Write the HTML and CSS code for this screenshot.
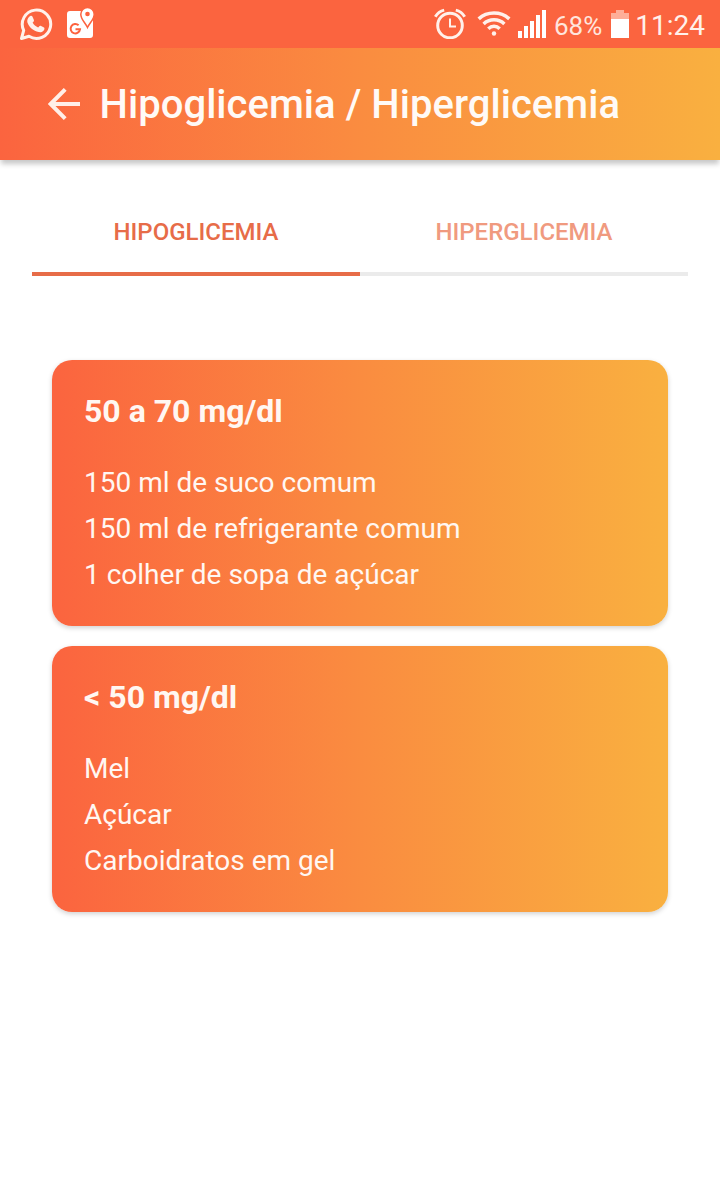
FILE: index.html
```
<!DOCTYPE html>
<html lang="pt-BR">
<head>
<meta charset="utf-8">
<title>Hipoglicemia / Hiperglicemia</title>
<link rel="stylesheet" href="styles.css">
</head>
<body>
<div class="status">
  <svg class="whatsapp" width="34" height="34" viewBox="0 0 34 34">
    <path d="M2.500 31.500 4.700 23.400A14.200 14.200 0 1 1 10 29.300Z" fill="none" stroke="#fff1eb" stroke-width="3" stroke-linejoin="round"/>
    <path d="M11.300 9c.7-.4 1.700-.3 2.100.5l1.500 3.400c.3.800-.2 1.500-1.300 2.700 1.300 2.400 3.100 3.900 5.500 5 1.100-1.500 1.700-2.200 2.500-1.900l3.400 1.700c.7.400.5 1.700-.1 2.800-.9 1.500-3.200 2.400-5.200 1.900-5.400-1.400-9.500-5-11.100-9.200-.9-2.700.5-5.700 2.700-6.900Z" fill="#fff1eb"/>
  </svg>
  <svg class="maps" width="30" height="34" viewBox="0 0 30 34">
    <path d="M4 5h14c-1 3 1 6 4 11.500L27 14v15a3 3 0 0 1-3 3H4a3 3 0 0 1-3-3V8a3 3 0 0 1 3-3Z" fill="#fff"/>
    <path d="M21.500 1.500a6.700 6.700 0 0 1 6.700 6.700c0 5-3.700 7.500-6.700 13.300-3-5.800-6.700-8.300-6.700-13.300a6.700 6.700 0 0 1 6.700-6.700Z" fill="#fff" stroke="#fd623e" stroke-width="1.500"/>
    <circle cx="21.500" cy="8" r="2.300" fill="#fd623e"/>
    <path d="M12.600 19.300A4.700 4.700 0 1 0 14 23.300H9.500" fill="none" stroke="#fd623e" stroke-width="2"/>
  </svg>
  <div class="indicators">
    <svg class="alarm" width="34" height="34" viewBox="0 0 34 34" fill="none" stroke="#fff1eb">
      <circle cx="17" cy="20.500" r="12.300" stroke-width="3"/>
      <path d="M17 13.500v8h6" stroke-width="2"/>
      <path d="M2.300 11.700Q5.500 6.500 11.200 5.100M22.800 5.100Q28.500 6.500 31.700 11.700" stroke-width="3"/>
    </svg>
    <svg class="wifi" width="34" height="26" viewBox="0 0 34 26" fill="none" stroke="#fff1eb" stroke-width="3.500">
      <path d="M1.700 8.900Q8 3 17 3T32.300 8.900M6.600 13.900Q10.900 9.800 17 9.800T27.400 13.900M11.300 18.700Q13.800 16.300 17 16.300T22.700 18.700"/>
      <circle cx="17" cy="23.500" r="2.200" fill="#fff1eb" stroke="none"/>
    </svg>
    <svg class="signal" width="28" height="28" viewBox="0 0 28 28" fill="#fff">
      <path d="M0 21h4v7H0ZM6 16h4v12H6ZM12 11h4v17h-4ZM18 5h4v23h-4ZM24 0h4v28h-4Z"/>
    </svg>
    <span class="percent">68%</span>
    <svg class="battery" width="18" height="28" viewBox="0 0 18 28">
      <path d="M0 3h5V0h8v3h5v6H0Z" fill="#feae98"/>
      <path d="M0 9h18v19H0Z" fill="#fff"/>
    </svg>
    <span class="clock">11:24</span>
  </div>
</div>
<header class="bar">
  <svg class="back" width="32" height="32" viewBox="0 0 32 32" fill="none" stroke="#ffefe8" stroke-width="4">
    <path d="M32 16H3M17.200 1.400 2.600 16l14.600 14.600"/>
  </svg>
  <h1 class="title">Hipoglicemia / Hiperglicemia</h1>
</header>
<nav class="tabs">
  <div class="tab active">HIPOGLICEMIA</div>
  <div class="tab">HIPERGLICEMIA</div>
</nav>
<main class="cards">
  <section class="card">
    <h2 class="range">50 a 70 mg/dl</h2>
    <p class="line">150 ml de suco comum</p>
    <p class="line">150 ml de refrigerante comum</p>
    <p class="line">1 colher de sopa de açúcar</p>
  </section>
  <section class="card">
    <h2 class="range">&lt; 50 mg/dl</h2>
    <p class="line">Mel</p>
    <p class="line">Açúcar</p>
    <p class="line">Carboidratos em gel</p>
  </section>
</main>
</body>
</html>
```

FILE: styles.css
```
* { box-sizing: border-box; }
body {
  margin: 0;
  min-height: 1184px;
  background: #fff;
  font-family: Roboto, "Liberation Sans", sans-serif;
}
h1, h2, p { margin: 0; white-space: nowrap; }
svg { display: block; flex: none; }
.status {
  display: flex;
  align-items: flex-start;
  height: 48px;
  padding: 0 15px 0 19px;
  background: #fb643f;
  color: #fff;
}
.whatsapp { margin-top: 7px; }
.maps { margin: 6px 0 0 13px; }
.indicators { display: flex; margin-left: auto; }
.alarm { margin: 5px 10px 0 0; }
.wifi { margin: 10px 7px 0 0; }
.signal { margin: 10px 8px 0 0; }
.battery { margin: 10px 6px 0 9px; }
.percent, .clock { line-height: 32px; white-space: nowrap; }
.percent { padding-top: 10px; font-size: 26px; color: #ffe5dd; }
.clock { padding-top: 10px; font-size: 28px; color: #fff1eb; }
.bar {
  display: flex;
  align-items: center;
  height: 112px;
  padding-left: 48px;
  gap: 19.500px;
  background: linear-gradient(90deg, #fb643f, #fa8c40 50%, #f9b040);
  box-shadow: 0 5px 5px -1px rgba(0, 0, 0, .22);
}
.title {
  padding-top: 2px;
  color: #fffaf6;
  font-size: 40px;
  font-weight: 500;
  line-height: 48px;
  letter-spacing: .04px;
}
.tabs { display: flex; margin: 32px 32px 0; }
.tab {
  flex: 1;
  height: 84px;
  border-bottom: 4px solid #ebebeb;
  color: #f09a7f;
  font-size: 24px;
  font-weight: 500;
  line-height: 80px;
  text-align: center;
}
.tab.active { border-color: #e76c48; color: #e76c48; }
.cards {
  display: flex;
  flex-direction: column;
  gap: 20px;
  padding: 84px 52px 0;
}
.card {
  height: 266px;
  padding: 32px;
  border-radius: 20px;
  background: linear-gradient(90deg, #fb643f, #fa8c40 50%, #f9b040);
  box-shadow: 0 2px 5px rgba(0, 0, 0, .18);
  color: #fff7f2;
}
.range {
  margin-bottom: 30px;
  font-size: 32px;
  font-weight: 700;
  line-height: 38px;
}
.line { font-size: 28px; line-height: 46px; }
```
